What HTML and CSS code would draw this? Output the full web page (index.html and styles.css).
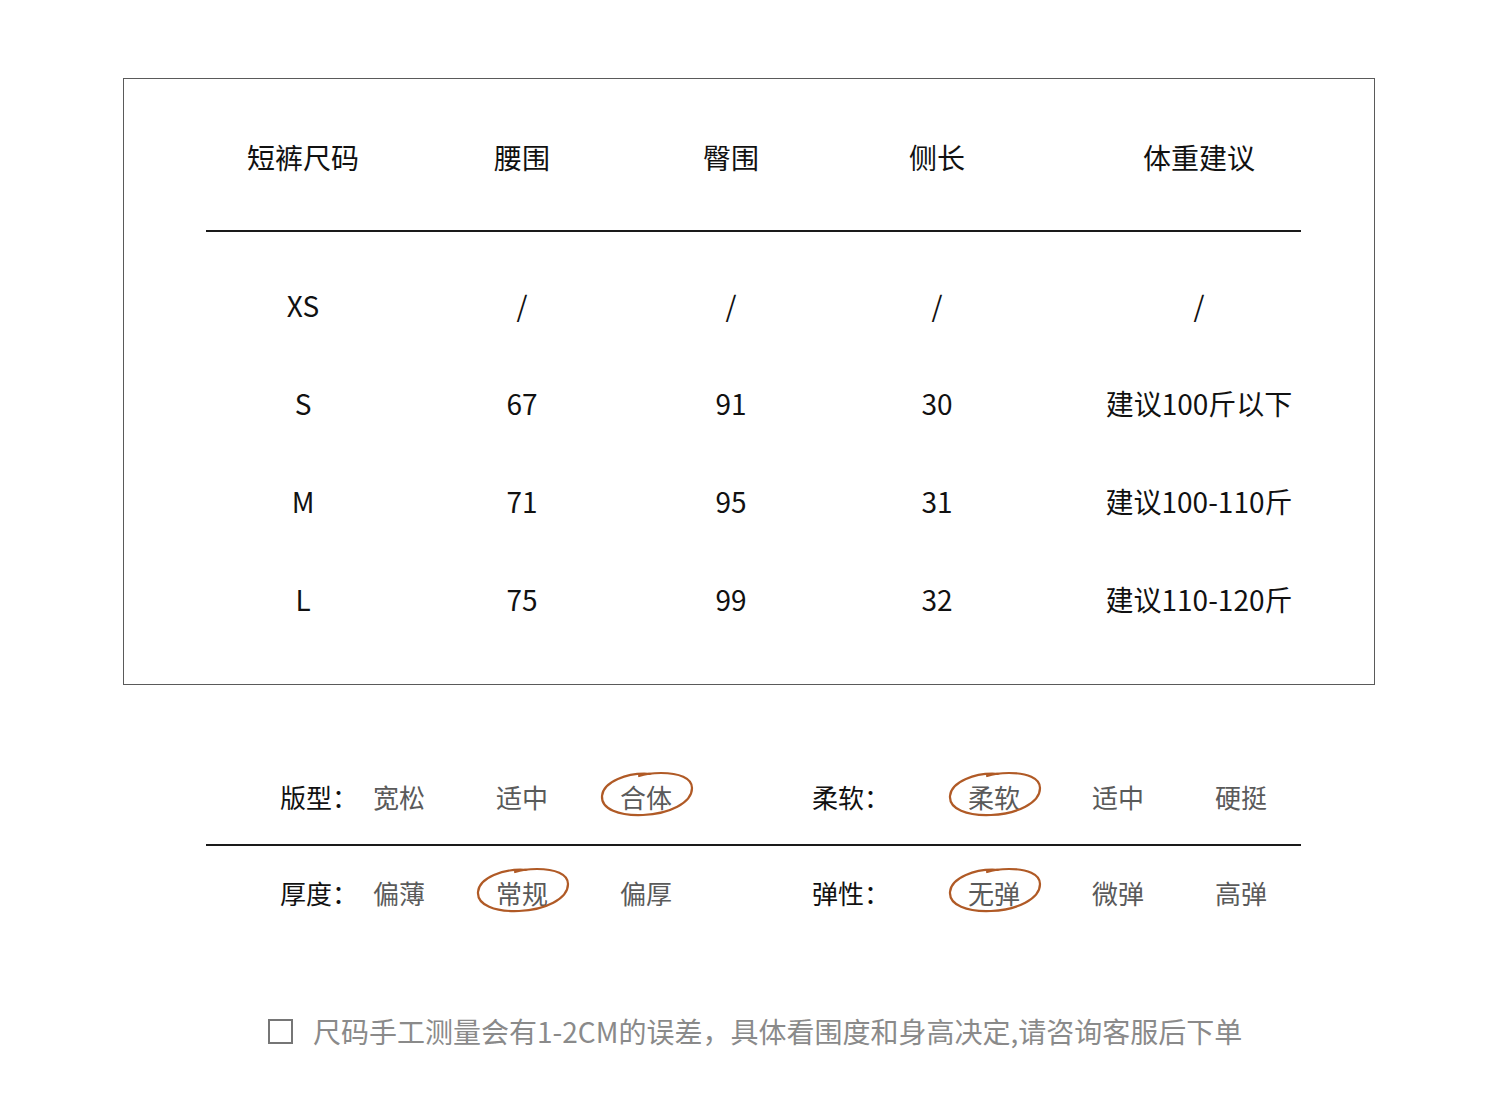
FILE: index.html
```html
<!DOCTYPE html>
<html lang="zh-CN">
<head>
<meta charset="utf-8">
<title>短裤尺码</title>
<link rel="stylesheet" href="styles.css">
</head>
<body>
<div class="page">
  <section class="size-box">
    <div class="grid head">
      <div class="cell">短裤尺码</div>
      <div class="cell">腰围</div>
      <div class="cell">臀围</div>
      <div class="cell">侧长</div>
      <div class="cell">体重建议</div>
    </div>
    <div class="rule"></div>
    <div class="body">
      <div class="grid row">
        <div class="cell">XS</div><div class="cell">/</div><div class="cell">/</div><div class="cell">/</div><div class="cell">/</div>
      </div>
      <div class="grid row">
        <div class="cell">S</div><div class="cell">67</div><div class="cell">91</div><div class="cell">30</div><div class="cell">建议100斤以下</div>
      </div>
      <div class="grid row">
        <div class="cell">M</div><div class="cell">71</div><div class="cell">95</div><div class="cell">31</div><div class="cell">建议100-110斤</div>
      </div>
      <div class="grid row">
        <div class="cell">L</div><div class="cell">75</div><div class="cell">99</div><div class="cell">32</div><div class="cell">建议110-120斤</div>
      </div>
    </div>
  </section>

  <section class="attrs">
    <div class="attr-row">
      <span class="label">版型：</span>
      <span class="opt">宽松</span>
      <span class="opt">适中</span>
      <span class="opt picked">合体<svg class="ring" viewBox="0 0 96 48"><path d="M52 4 C28 2 4 12 3 26 C2 39 20 46 44 45 C70 44 93 33 93 18 C93 8 80 3 62 3 C54 3 46 4 40 6" /></svg></span>
      <span class="label">柔软：</span>
      <span class="opt picked">柔软<svg class="ring" viewBox="0 0 96 48"><path d="M52 4 C28 2 4 12 3 26 C2 39 20 46 44 45 C70 44 93 33 93 18 C93 8 80 3 62 3 C54 3 46 4 40 6" /></svg></span>
      <span class="opt">适中</span>
      <span class="opt">硬挺</span>
    </div>
    <div class="rule"></div>
    <div class="attr-row">
      <span class="label">厚度：</span>
      <span class="opt">偏薄</span>
      <span class="opt picked">常规<svg class="ring" viewBox="0 0 96 48"><path d="M52 4 C28 2 4 12 3 26 C2 39 20 46 44 45 C70 44 93 33 93 18 C93 8 80 3 62 3 C54 3 46 4 40 6" /></svg></span>
      <span class="opt">偏厚</span>
      <span class="label">弹性：</span>
      <span class="opt picked">无弹<svg class="ring" viewBox="0 0 96 48"><path d="M52 4 C28 2 4 12 3 26 C2 39 20 46 44 45 C70 44 93 33 93 18 C93 8 80 3 62 3 C54 3 46 4 40 6" /></svg></span>
      <span class="opt">微弹</span>
      <span class="opt">高弹</span>
    </div>
  </section>

  <footer class="note">
    <span class="checkbox"></span>
    <span class="note-text">尺码手工测量会有1-2CM的误差，具体看围度和身高决定,请咨询客服后下单</span>
  </footer>
</div>
</body>
</html>
```

FILE: styles.css
```css
* { box-sizing: border-box; }
html, body {
  margin: 0;
  padding: 0;
  background: #fff;
}
body {
  font-family: "Noto Sans CJK SC", "Noto Sans", sans-serif;
  color: #111;
  width: 1500px;
  height: 1115px;
  overflow: hidden;
}
.page {
  padding-top: 78px;
}
.size-box {
  margin-left: 123px;
  width: 1252px;
  height: 607px;
  border: 1px solid #5a5a5a;
  padding: 30px 0 0 82px;
}
.grid {
  display: grid;
  grid-template-columns: 194px 244px 174px 238px 286px;
}
.cell {
  text-align: center;
  font-size: 28px;
  height: 98px;
  line-height: 97px;
  white-space: nowrap;
}
.head {
  margin-bottom: 23px;
}
.rule {
  width: 1095px;
  height: 2px;
  background: #1a1a1a;
}
.body {
  margin-top: 25px;
}

.attrs {
  margin-top: 88px;
  padding-left: 206px;
}
.attr-row {
  display: grid;
  grid-template-columns: 93px 123px 124px 192px 156px 124px 123px 60px;
  padding-left: 74px;
  height: 48px;
  line-height: 48px;
  font-size: 26px;
  margin: 23px 0;
}
.attrs .attr-row:first-child { margin-top: 0; }
.label {
  color: #111;
  white-space: nowrap;
}
.opt {
  color: #5a5a5a;
  position: relative;
  white-space: nowrap;
}
.ring {
  position: absolute;
  left: -21px;
  top: -3px;
  width: 96px;
  height: 48px;
  overflow: visible;
}
.ring path {
  fill: none;
  stroke: #b05a26;
  stroke-width: 2.2;
  stroke-linecap: round;
}

.note {
  margin-top: 94px;
  margin-left: 268px;
  display: flex;
  align-items: center;
  height: 40px;
}
.checkbox {
  width: 25px;
  height: 25px;
  border: 2px solid #767676;
  margin-right: 20px;
}
.note-text {
  font-size: 28px;
  color: #8a8a8a;
  white-space: nowrap;
}
```
